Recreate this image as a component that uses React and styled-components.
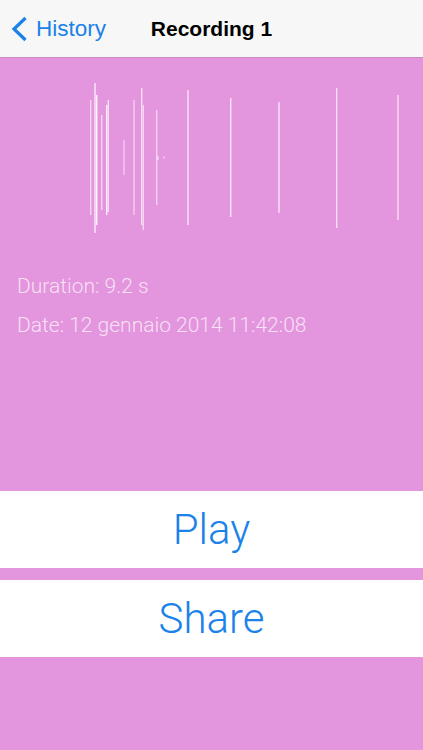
import React from 'react'
import styled, { createGlobalStyle } from 'styled-components'

const GlobalStyle = createGlobalStyle`
  html, body {
    margin: 0;
    padding: 0;
    background: #e396dd;
  }
  body {
    font-family: Roboto, "Liberation Sans", sans-serif;
  }
`

const Page = styled.div`
  width: 423px;
  height: 750px;
  display: flex;
  flex-direction: column;
  background: #e396dd;
  overflow: hidden;
`

const NavBar = styled.div`
  height: 58px;
  box-sizing: border-box;
  border-bottom: 1px solid #c98ac4;
  background: #f7f7f7;
  display: flex;
  align-items: center;
  position: relative;
`

const BackButton = styled.div`
  display: flex;
  align-items: center;
  gap: 8px;
  padding-left: 11px;
  color: #1a82e8;
  font-size: 22.5px;
  font-family: "Liberation Sans", Arial, sans-serif;
`

const Title = styled.div`
  position: absolute;
  left: 0;
  right: 0;
  text-align: center;
  font-weight: bold;
  font-size: 21px;
  color: #000;
  font-family: "Liberation Sans", Arial, sans-serif;
  pointer-events: none;
`

const Content = styled.div`
  flex: 1;
  display: flex;
  flex-direction: column;
`

const Wave = styled.svg`
  display: block;
  margin-top: 20px;
`

const Info = styled.div`
  padding: 36px 0 0 17px;
  display: flex;
  flex-direction: column;
  gap: 15px;
`

const InfoLine = styled.div`
  color: rgba(255, 255, 255, 0.72);
  font-size: 21px;
  font-weight: 300;
  line-height: 24px;
`

const Buttons = styled.div`
  margin-top: 154px;
  display: flex;
  flex-direction: column;
  gap: 12px;
`

const BigButton = styled.div`
  height: 77px;
  background: #fff;
  display: flex;
  align-items: center;
  justify-content: center;
  color: #1a82e8;
  font-size: 42px;
  font-weight: 300;
`

// x, top, bottom, opacity
const lines = [
  [90.7, 100, 215, 0.6],
  [95, 83, 233, 0.8],
  [96.7, 95, 225, 0.9],
  [101.7, 115, 210, 0.6],
  [106.7, 105, 215, 0.85],
  [108.3, 100, 212, 0.7],
  [124, 140, 175, 0.5],
  [134, 100, 215, 0.55],
  [141.7, 88, 225, 0.7],
  [143.3, 105, 230, 0.6],
  [156.7, 110, 205, 0.6],
  [188, 90, 225, 0.75],
  [230.7, 98, 217, 0.75],
  [279, 102, 213, 0.75],
  [336.7, 88, 228, 0.7],
  [398, 95, 220, 0.65],
]

const Waveform = () => (
  <Wave width="423" height="160" viewBox="0 78 423 160">
    {lines.map(([x, y1, y2, o], i) => (
      <line key={i} x1={x} y1={y1} x2={x} y2={y2} stroke="#fff" strokeWidth="1.4" strokeOpacity={o} />
    ))}
    <line x1="158" y1="156" x2="158" y2="160" stroke="#fff" strokeWidth="1.4" strokeOpacity="0.6" />
    <line x1="164" y1="156" x2="164" y2="159" stroke="#fff" strokeWidth="1.2" strokeOpacity="0.5" />
  </Wave>
)

const Chevron = () => (
  <svg width="17" height="26" viewBox="0 0 17 26">
    <path d="M14.5 2 L3 13 L14.5 24" fill="none" stroke="#1a82e8" strokeWidth="3.2" />
  </svg>
)

const App = () => (
  <Page>
    <GlobalStyle />
    <NavBar>
      <BackButton>
        <Chevron />
        <span>History</span>
      </BackButton>
      <Title>Recording 1</Title>
    </NavBar>
    <Content>
      <Waveform />
      <Info>
        <InfoLine>Duration: 9.2 s</InfoLine>
        <InfoLine>Date: 12 gennaio 2014 11:42:08</InfoLine>
      </Info>
      <Buttons>
        <BigButton>Play</BigButton>
        <BigButton>Share</BigButton>
      </Buttons>
    </Content>
  </Page>
)

export default App
